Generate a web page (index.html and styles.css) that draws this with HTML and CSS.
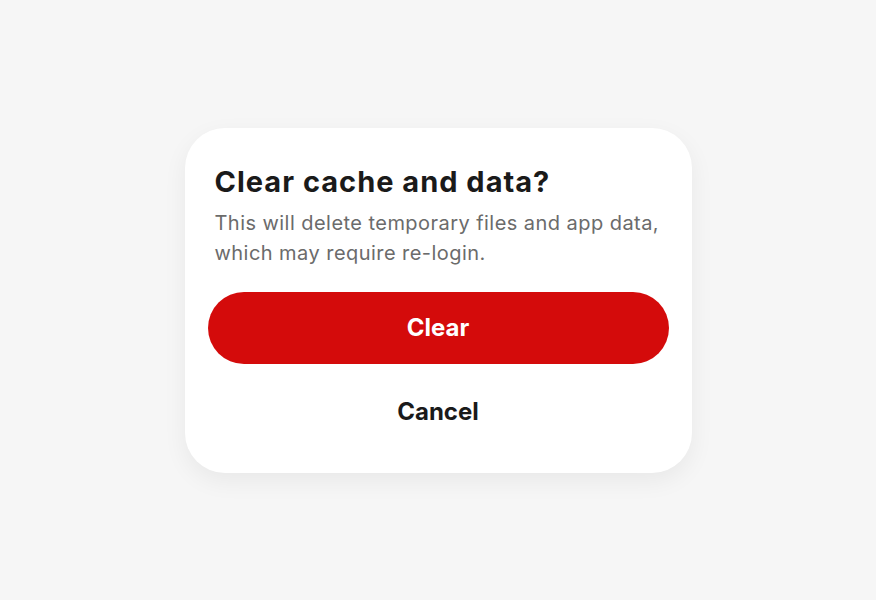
FILE: index.html
```html
<!DOCTYPE html>
<html lang="en">
<head>
  <meta charset="UTF-8">
  <meta name="viewport" content="width=device-width, initial-scale=1.0">
  <title>Clear cache</title>
  <link rel="stylesheet" href="styles.css">
</head>
<body>
  <div class="dialogo">
    <div class="textos">
      <h2 class="titulo">Clear cache and data?</h2>
      <p class="mensaje">This will delete temporary files and app data, which may require re-login.</p>
    </div>
    <button class="btn-clear">Clear</button>
    <button class="btn-cancel">Cancel</button>
  </div>
</body>
</html>
```

FILE: styles.css
```css
body {
  font-family: 'Inter', 'Liberation Sans', sans-serif;
  display: flex;
  justify-content: center;
  align-items: center;
  min-height: 100vh;
  margin: 0;
  background: #f6f6f6;
}
.dialogo {
  box-sizing: border-box;
  width: 507px;
  height: 345px;
  background: white;
  border-radius: 40px;
  padding: 36px 23px 0;
  box-shadow: 0 8px 24px rgba(0,0,0,0.06);
  display: flex;
  flex-direction: column;
}
.textos {
  padding: 0 7px;
}
.titulo {
  margin: 0;
  font-size: 29px;
  font-weight: 700;
  line-height: 36px;
  color: #1a1a1a;
  letter-spacing: 1px;
}
.mensaje {
  margin: 8px 0 0;
  font-size: 20px;
  line-height: 30px;
  color: #6b6b6b;
  letter-spacing: 0.45px;
}
.btn-clear {
  margin-top: 24px;
  height: 72px;
  border: none;
  border-radius: 36px;
  background: #d40b0b;
  color: white;
  font-family: inherit;
  font-size: 24px;
  font-weight: 700;
  cursor: pointer;
}
.btn-cancel {
  margin-top: 14px;
  height: 68px;
  border: none;
  background: none;
  color: #1a1a1a;
  font-family: inherit;
  font-size: 24px;
  font-weight: 700;
  cursor: pointer;
}
```
